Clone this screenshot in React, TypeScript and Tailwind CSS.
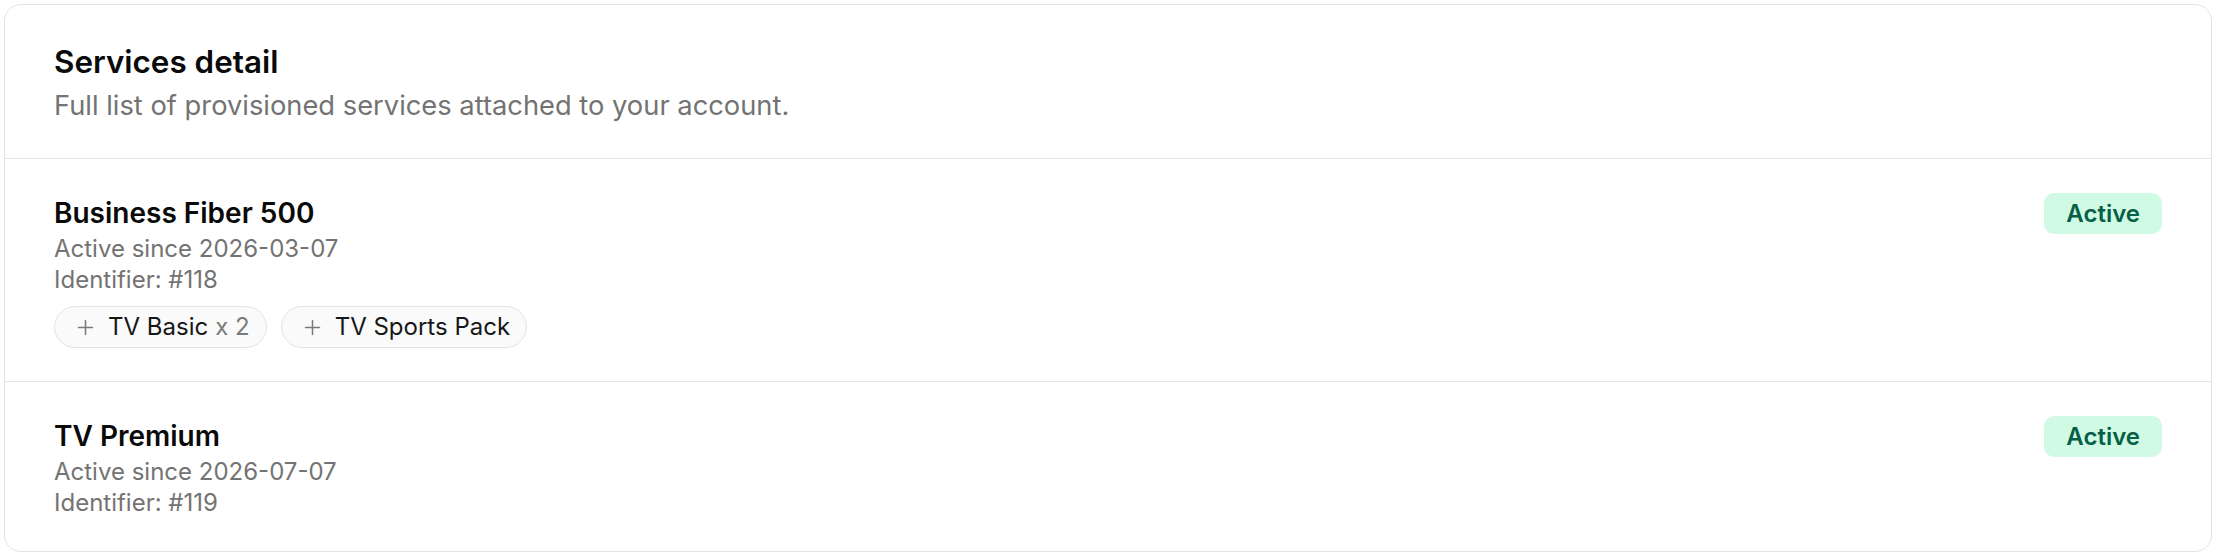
import React from 'react';

type Addon = { name: string; qty?: number };

interface Service {
  id: number;
  name: string;
  since: string;
  status: string;
  addons: Addon[];
}

const services: Service[] = [
  {
    id: 118,
    name: 'Business Fiber 500',
    since: '2026-03-07',
    status: 'Active',
    addons: [{ name: 'TV Basic', qty: 2 }, { name: 'TV Sports Pack' }],
  },
  { id: 119, name: 'TV Premium', since: '2026-07-07', status: 'Active', addons: [] },
];

function PlusIcon() {
  return (
    <svg width="17" height="17" viewBox="0 0 17 17" fill="none" className="shrink-0">
      <path d="M8.5 1.5v14M1.5 8.5h14" stroke="#7a7a7a" strokeWidth="1.5" strokeLinecap="round" />
    </svg>
  );
}

function AddonChip({ addon }: { addon: Addon }) {
  return (
    <div className="h-[42px] flex items-center gap-[14px] pl-[22px] pr-[16px] rounded-full border border-[#e4e4e4] bg-[#fafafa]">
      <PlusIcon />
      <span className="text-[24px] text-[#171717] whitespace-nowrap">
        {addon.name}
        {addon.qty && <span className="ml-[7px] text-[#7a7a7a]">x {addon.qty}</span>}
      </span>
    </div>
  );
}

function ServiceRow({ service }: { service: Service }) {
  return (
    <div className="flex items-start justify-between px-[49px] pt-[34px] pb-[33px]">
      <div>
        <h3 className="text-[28px] leading-[40px] font-semibold text-[#0a0a0a]">{service.name}</h3>
        <p className="text-[24px] leading-[31px] text-[#737373]">Active since {service.since}</p>
        <p className="text-[24px] leading-[31px] text-[#737373]">Identifier: #{service.id}</p>
        {service.addons.length > 0 && (
          <div className="flex gap-[14px] mt-[11px]">
            {service.addons.map((a) => (
              <AddonChip key={a.name} addon={a} />
            ))}
          </div>
        )}
      </div>
      <span className="h-[41px] flex items-center px-[22px] rounded-[10px] bg-[#d1fae5] text-[24px] font-semibold text-[#065f46]">
        {service.status}
      </span>
    </div>
  );
}

export default function App() {
  return (
    <div className="min-h-screen bg-white p-1" style={{ fontFamily: 'Inter, "Noto Sans", sans-serif' }}>
      <div className="rounded-[17px] border border-[#e2e2e2] bg-white overflow-hidden">
        <div className="px-[49px] pt-[38px] pb-[35px] border-b border-[#e5e5e5]">
          <h2 className="text-[31.4px] leading-[39px] font-semibold text-[#0a0a0a]">Services detail</h2>
          <p className="mt-[6px] text-[27.3px] leading-[35px] text-[#737373]">
            Full list of provisioned services attached to your account.
          </p>
        </div>
        <div className="divide-y divide-[#e5e5e5]">
          {services.map((s) => (
            <ServiceRow key={s.id} service={s} />
          ))}
        </div>
      </div>
    </div>
  );
}
